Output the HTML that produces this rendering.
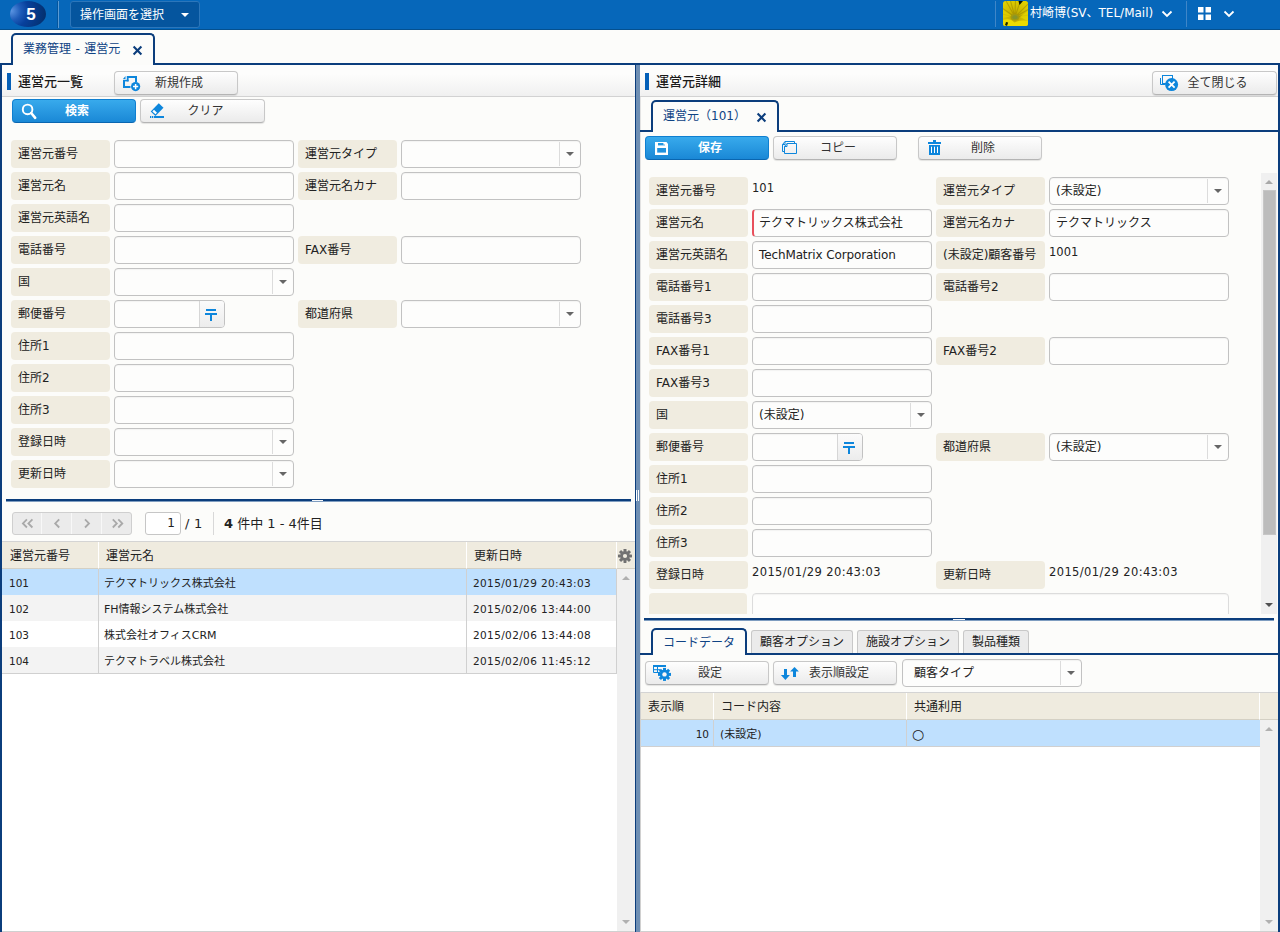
<!DOCTYPE html>
<html lang="ja"><head><meta charset="utf-8"><title>業務管理 - 運営元</title>
<style>
*{box-sizing:border-box;margin:0;padding:0}
html,body{width:1280px;height:932px;overflow:hidden;background:#fcfcfa}
body{position:relative;font-family:"DejaVu Sans","Liberation Sans","Noto Sans CJK JP",sans-serif;font-size:12px;color:#222;line-height:1}
.a{position:absolute}
.jp{font-family:"DejaVu Sans","Liberation Sans","Noto Sans CJK JP",sans-serif}
.lbl{position:absolute;background:#f0ece0;border-radius:4px;height:28px;line-height:29px;padding-left:7px;font-size:12px;color:#222;white-space:nowrap}
.inp{position:absolute;height:28px;border:1px solid #c2c2c2;border-radius:4px;background:#fdfdfc;line-height:27px;padding-left:6px;font-size:12px;white-space:nowrap;overflow:hidden;box-shadow:inset 0 1px 1px rgba(0,0,0,.04)}
.inp .sep{position:absolute;right:20px;top:1px;bottom:1px;width:1px;background:#dcdcdc}
.inp .car{position:absolute;right:6px;top:11px;width:0;height:0;border-left:4px solid transparent;border-right:4px solid transparent;border-top:4px solid #666}
.btn{position:absolute;height:24px;border:1px solid #c8c8c8;border-bottom-color:#b4b4b4;border-radius:4px;background:linear-gradient(#fefefe,#ebebeb);box-shadow:0 1px 1px rgba(0,0,0,.10);font-size:12px;color:#333;text-align:center;line-height:22px;white-space:nowrap}
.btn.blue{border:1px solid #0f7fd0;border-bottom-color:#0a66b0;background:linear-gradient(#38aaec,#1a88d6);box-shadow:none;color:#fff;font-weight:bold}
.btn svg{position:absolute}
.val{position:absolute;font-size:11.5px;line-height:14px;white-space:nowrap;color:#222}
.val.dt{letter-spacing:.39px}
.gc.num{font-size:10.5px}
.gc.num.dt{letter-spacing:.37px}
.dk{background:#0b3d7c}
.gh{position:absolute;background:#efebdf;height:27px;line-height:28px;font-size:12px;padding-left:8px;border-right:1px solid #fff;border-bottom:1px solid #d4d0c4;white-space:nowrap}
.gc{position:absolute;height:26px;line-height:29px;font-size:11px;padding-left:6px;white-space:nowrap;border-right:1px solid #d0d0d0}
.sech{position:absolute;height:32px;background:linear-gradient(#fdfdfc 30%,#f0f0f0);border-bottom:1px solid #d2d2d2}
.tab{position:absolute;border:2px solid #0b3d7c;border-bottom:none;border-radius:5px 5px 0 0;background:#fcfcfa;font-size:12px;color:#0f4384;white-space:nowrap}
.tabi{position:absolute;border:1px solid #c8c8c8;border-bottom:none;border-radius:3px 3px 0 0;background:#ebebeb;font-size:12px;color:#222;white-space:nowrap;text-align:center}
</style></head>
<body>
<div class="a" style="left:0;top:0;width:1280px;height:30px;background:#0667ba;border-bottom:1px solid #04508f"></div>
<div class="a" style="left:10px;top:1px;width:36px;height:26px;border-radius:50%;background:radial-gradient(ellipse 95% 130% at 4% 38%,#5a94e2 0%,#1d5bb8 28%,#07409c 50%,#04306f 100%)"></div>
<div class="a" style="left:13px;top:2px;width:36px;height:26px;line-height:26px;text-align:center;color:#fff;font-weight:bold;font-size:17px;font-family:'Liberation Sans',sans-serif">5</div>
<div class="a" style="left:57px;top:1px;width:1px;height:27px;background:#04559c"></div><div class="a" style="left:58px;top:1px;width:1px;height:27px;background:#5a9bd5"></div>
<div class="a jp" style="left:70px;top:1px;width:130px;height:27px;background:#05559e;border:1px solid #2c76ba;border-radius:3px;color:#fff;font-size:12px;line-height:26px;padding-left:9px">操作画面を選択</div>
<div class="a" style="left:181px;top:13px;width:0;height:0;border-left:4px solid transparent;border-right:4px solid transparent;border-top:4px solid #fff"></div>
<div class="a" style="left:995px;top:1px;width:1px;height:26px;background:#3f86c8"></div>
<svg class="a" style="left:1003px;top:1px" width="25" height="25" viewBox="0 0 25 25"><defs><clipPath id="av"><rect width="25" height="25" rx="2.5"/></clipPath><radialGradient id="avg" cx="0.48" cy="0.64" r="0.75"><stop offset="0" stop-color="#b0a000"/><stop offset="0.3" stop-color="#c8b400"/><stop offset="1" stop-color="#e2d200"/></radialGradient></defs><g clip-path="url(#av)"><rect width="25" height="25" fill="url(#avg)"/><path d="M12 16 L2 -2 M12 16 L7 -2 M12 16 L12.5 -2 M12 16 L18 -2 M12 16 L26 2 M12 16 L26 8 M12 16 L26 14 M12 16 L-1 7 M12 16 L-1 13" stroke="#9a8600" stroke-opacity=".55" stroke-width="1.1" fill="none"/><path d="M0 9 L9 15 L0 17 Z" fill="#e6d600" fill-opacity=".6"/><path d="M0 19 Q7 16.5 11.5 21.5 Q18 18.5 25 20 V25 H0Z" fill="#ecdc00"/><path d="M17 16 L25 10 V20 Z" fill="#e8d800" fill-opacity=".7"/><ellipse cx="12" cy="16.3" rx="4.3" ry="3.2" fill="#a39a10"/><ellipse cx="12" cy="16.3" rx="2.6" ry="2" fill="#86962a"/><path d="M15.5 0 H20 L16.5 4 Z" fill="#0a1200"/><path d="M3 21 L5.2 21.5 L4 25 L2 24Z" fill="#1c2a00"/></g></svg>
<div class="a jp" style="left:1030px;top:6px;color:#fff;font-size:12px;line-height:14px;white-space:nowrap">村崎博(SV、TEL/Mail)</div>
<svg class="a" style="left:1161px;top:10px" width="12" height="8" viewBox="0 0 12 8"><path d="M1.5 1.5 L6 6 L10.5 1.5" fill="none" stroke="#fff" stroke-width="1.8"/></svg>
<div class="a" style="left:1186px;top:1px;width:1px;height:26px;background:#3f86c8"></div>
<svg class="a" style="left:1198px;top:7px" width="13" height="13" viewBox="0 0 13 13"><rect x="0" y="0" width="5.5" height="5.5" fill="#fff"/><rect x="7.5" y="0" width="5.5" height="5.5" fill="#fff"/><rect x="0" y="7.5" width="5.5" height="5.5" fill="#fff"/><rect x="7.5" y="7.5" width="5.5" height="5.5" fill="#fff"/></svg>
<svg class="a" style="left:1223px;top:10px" width="12" height="8" viewBox="0 0 12 8"><path d="M1.5 1.5 L6 6 L10.5 1.5" fill="none" stroke="#fff" stroke-width="1.8"/></svg>
<div class="a dk" style="left:0;top:63px;width:1280px;height:2px"></div>
<div class="a dk" style="left:0;top:63px;width:2px;height:869px"></div>
<div class="a dk" style="left:1278px;top:63px;width:2px;height:869px"></div>
<div class="tab jp" style="left:11px;top:33px;width:144px;height:32px;line-height:29px;padding-left:10px;word-spacing:.6px">業務管理 - 運営元</div>
<svg class="a" style="left:132px;top:45px" width="11" height="11" viewBox="0 0 11 11"><path d="M1.6 1.6 L9.4 9.4 M9.4 1.6 L1.6 9.4" stroke="#0b3d7c" stroke-width="2.1"/></svg>
<div class="a dk" style="left:635px;top:65px;width:1px;height:867px"></div>
<div class="a" style="left:636px;top:65px;width:4px;height:867px;background:#6f8fb3"></div>
<div class="a" style="left:636px;top:490px;width:1px;height:11px;background:#fff"></div><div class="a" style="left:638px;top:490px;width:1px;height:11px;background:#fff"></div>
<div class="sech" style="left:2px;top:65px;width:633px"></div>
<div class="a" style="left:7px;top:73px;width:4px;height:17px;background:#0560b8"></div>
<div class="a jp" style="left:18px;top:74px;font-size:13px;font-weight:500;line-height:15px;color:#1a1a1a">運営元一覧</div>
<div class="btn jp" style="left:114px;top:71px;width:124px;padding-left:6px">新規作成</div>
<svg class="a" style="left:121px;top:74px" width="20" height="19" viewBox="121 74 20 19"><g fill="#0d86dc"><rect x="123" y="80.5" width="2" height="7.5"/><rect x="123" y="86" width="7.5" height="2"/><rect x="127" y="76" width="10" height="2"/><rect x="135" y="76" width="2" height="6"/><rect x="126.8" y="76" width="1.8" height="5.4"/><rect x="123" y="79.8" width="5.6" height="1.6"/><path d="M123 79 L125.5 76 V79 Z"/><circle cx="135.6" cy="86.6" r="4.6"/></g><path d="M133 86.6 H138.2 M135.6 84 V89.2" stroke="#fff" stroke-width="1.5"/></svg>
<div class="btn blue jp" style="left:12px;top:99px;width:124px;padding-left:6px">検索</div>
<svg class="a" style="left:20px;top:102px" width="18" height="18" viewBox="20 102 18 18"><circle cx="27.6" cy="109.4" r="4.8" fill="none" stroke="#fff" stroke-width="1.9"/><path d="M31.2 113 L35.2 117.8" stroke="#fff" stroke-width="2.6" stroke-linecap="round"/></svg>
<div class="btn jp" style="left:140px;top:99px;width:125px;padding-left:6px">クリア</div>
<svg class="a" style="left:149px;top:102px" width="17" height="18" viewBox="149 102 17 18"><g transform="translate(157.1,109.6) rotate(-46)"><rect x="-5.8" y="-3.3" width="11.6" height="6.6" fill="#0d86dc"/><rect x="-4.6" y="-2.1" width="2.3" height="4.2" fill="#fff"/></g><rect x="154" y="116" width="10" height="2" fill="#0d86dc"/><rect x="150" y="116" width="1.3" height="2" fill="#0d86dc"/><rect x="152" y="116" width="1.3" height="2" fill="#0d86dc"/></svg>
<div class="lbl" style="left:11px;top:140px;width:99px">運営元番号</div>
<div class="inp" style="left:114px;top:140px;width:180px"></div>
<div class="lbl" style="left:298px;top:140px;width:99px">運営元タイプ</div>
<div class="inp" style="left:401px;top:140px;width:180px"><span class="sep"></span><span class="car"></span></div>
<div class="lbl" style="left:11px;top:172px;width:99px">運営元名</div>
<div class="inp" style="left:114px;top:172px;width:180px"></div>
<div class="lbl" style="left:298px;top:172px;width:99px">運営元名カナ</div>
<div class="inp" style="left:401px;top:172px;width:180px"></div>
<div class="lbl" style="left:11px;top:204px;width:99px">運営元英語名</div>
<div class="inp" style="left:114px;top:204px;width:180px"></div>
<div class="lbl" style="left:11px;top:236px;width:99px">電話番号</div>
<div class="inp" style="left:114px;top:236px;width:180px"></div>
<div class="lbl" style="left:298px;top:236px;width:99px">FAX番号</div>
<div class="inp" style="left:401px;top:236px;width:180px"></div>
<div class="lbl" style="left:11px;top:268px;width:99px">国</div>
<div class="inp" style="left:114px;top:268px;width:180px"><span class="sep"></span><span class="car"></span></div>
<div class="lbl" style="left:11px;top:300px;width:99px">郵便番号</div>
<div class="inp" style="left:114px;top:300px;width:111px"><span class="a" style="left:84px;top:0;width:26px;height:26px;background:linear-gradient(#fbfbfb,#ececec);border-left:1px solid #d6d6d6"></span><span class="a" style="left:91px;top:8px;width:10px;height:2px;background:#0d86dc"></span><span class="a" style="left:90px;top:12px;width:12px;height:2px;background:#0d86dc"></span><span class="a" style="left:95px;top:14px;width:2px;height:6px;background:#0d86dc"></span></div>
<div class="lbl" style="left:298px;top:300px;width:99px">都道府県</div>
<div class="inp" style="left:401px;top:300px;width:180px"><span class="sep"></span><span class="car"></span></div>
<div class="lbl" style="left:11px;top:332px;width:99px">住所1</div>
<div class="inp" style="left:114px;top:332px;width:180px"></div>
<div class="lbl" style="left:11px;top:364px;width:99px">住所2</div>
<div class="inp" style="left:114px;top:364px;width:180px"></div>
<div class="lbl" style="left:11px;top:396px;width:99px">住所3</div>
<div class="inp" style="left:114px;top:396px;width:180px"></div>
<div class="lbl" style="left:11px;top:428px;width:99px">登録日時</div>
<div class="inp" style="left:114px;top:428px;width:180px"><span class="sep"></span><span class="car"></span></div>
<div class="lbl" style="left:11px;top:460px;width:99px">更新日時</div>
<div class="inp" style="left:114px;top:460px;width:180px"><span class="sep"></span><span class="car"></span></div>
<div class="a dk" style="left:6px;top:499px;width:625px;height:2px"></div><div class="a" style="left:6px;top:501px;width:625px;height:1px;background:#7f9dc0"></div>
<div class="a" style="left:312px;top:500px;width:11px;height:1px;background:#f4f7fb"></div>
<div class="a" style="left:12px;top:512px;width:120px;height:23px;border:1px solid #cfcfcf;border-radius:3px;background:#ebebeb"></div>
<div class="a" style="left:41px;top:513px;width:1px;height:21px;background:#f8f8f8"></div>
<div class="a" style="left:71px;top:513px;width:1px;height:21px;background:#f8f8f8"></div>
<div class="a" style="left:101px;top:513px;width:1px;height:21px;background:#f8f8f8"></div>
<svg class="a" style="left:12px;top:512px" width="120" height="23" viewBox="12 512 120 23"><path d="M26.9 519.3 L22.900000000000002 523.4 L26.9 527.5M32.4 519.3 L28.400000000000002 523.4 L32.4 527.5M59.2 519.3 L55.2 523.4 L59.2 527.5M85 519.3 L89 523.4 L85 527.5M112.8 519.3 L116.8 523.4 L112.8 527.5M118.3 519.3 L122.3 523.4 L118.3 527.5" fill="none" stroke="#a9a9a9" stroke-width="1.8"/></svg>
<div class="a" style="left:145px;top:512px;width:36px;height:23px;border:1px solid #c6c6c6;border-radius:3px;background:#fff;text-align:right;padding-right:5px;line-height:21px;font-size:12px">1</div>
<div class="a" style="left:185px;top:516px;font-size:13px;line-height:15px;letter-spacing:.3px">/ 1</div>
<div class="a" style="left:213px;top:512px;width:1px;height:23px;background:#d8d8d8"></div>
<div class="a jp" style="left:224px;top:516px;font-size:13px;line-height:15px;white-space:nowrap;font-family:'DejaVu Sans','Noto Sans CJK JP',sans-serif"><b>4</b> 件中 1 - 4件目</div>
<div class="a" style="left:2px;top:541px;width:633px;height:1px;background:#d4d4d4"></div>
<div class="gh jp" style="left:2px;top:542px;width:97px">運営元番号</div>
<div class="gh jp" style="left:99px;top:542px;width:368px;padding-left:7px">運営元名</div>
<div class="gh jp" style="left:467px;top:542px;width:150px;padding-left:7px">更新日時</div>
<div class="gh" style="left:617px;top:542px;width:18px;border-right:none;padding:0"></div>
<svg class="a" style="left:618px;top:549px" width="14" height="14" viewBox="-7 -7 14 14"><g fill="#727272"><circle r="4.7"/><rect x="-1.5" y="-7" width="3" height="14" rx="0.4" transform="rotate(0)"/><rect x="-1.5" y="-7" width="3" height="14" rx="0.4" transform="rotate(45)"/><rect x="-1.5" y="-7" width="3" height="14" rx="0.4" transform="rotate(90)"/><rect x="-1.5" y="-7" width="3" height="14" rx="0.4" transform="rotate(135)"/></g><circle r="2.1" fill="#efebdf"/></svg>
<div class="a" style="left:2px;top:673px;width:633px;height:259px;background:#fff"></div>
<div class="a" style="left:2px;top:569px;width:615px;height:26px;background:#bfe0fe"></div>
<div class="gc num" style="left:2px;top:569px;width:97px;padding-left:7px">101</div>
<div class="gc jp" style="left:99px;top:569px;width:368px;padding-left:5px">テクマトリックス株式会社</div>
<div class="gc num dt" style="left:467px;top:569px;width:150px">2015/01/29 20:43:03</div>
<div class="a" style="left:2px;top:595px;width:615px;height:26px;background:#f3f3f3"></div>
<div class="gc num" style="left:2px;top:595px;width:97px;padding-left:7px">102</div>
<div class="gc jp" style="left:99px;top:595px;width:368px;padding-left:5px">FH情報システム株式会社</div>
<div class="gc num dt" style="left:467px;top:595px;width:150px">2015/02/06 13:44:00</div>
<div class="a" style="left:2px;top:621px;width:615px;height:26px;background:#ffffff"></div>
<div class="gc num" style="left:2px;top:621px;width:97px;padding-left:7px">103</div>
<div class="gc jp" style="left:99px;top:621px;width:368px;padding-left:5px">株式会社オフィスCRM</div>
<div class="gc num dt" style="left:467px;top:621px;width:150px">2015/02/06 13:44:08</div>
<div class="a" style="left:2px;top:647px;width:615px;height:26px;background:#f3f3f3"></div>
<div class="gc num" style="left:2px;top:647px;width:97px;padding-left:7px">104</div>
<div class="gc jp" style="left:99px;top:647px;width:368px;padding-left:5px">テクマトラベル株式会社</div>
<div class="gc num dt" style="left:467px;top:647px;width:150px">2015/02/06 11:45:12</div>
<div class="a" style="left:2px;top:673px;width:615px;height:1px;background:#d0d0d0"></div>
<div class="a" style="left:617px;top:569px;width:18px;height:363px;background:#f0f0f0"></div>
<div class="a" style="left:622px;top:576px;width:0;height:0;border-left:4px solid transparent;border-right:4px solid transparent;border-bottom:4px solid #b0b0b0"></div>
<div class="a" style="left:622px;top:920px;width:0;height:0;border-left:4px solid transparent;border-right:4px solid transparent;border-top:4px solid #b0b0b0"></div>
<div class="a" style="left:640px;top:65px;width:1px;height:867px;background:#e2e2e2"></div>
<div class="sech" style="left:640px;top:65px;width:638px"></div>
<div class="a" style="left:645px;top:73px;width:4px;height:17px;background:#0560b8"></div>
<div class="a jp" style="left:656px;top:74px;font-size:13px;font-weight:500;line-height:15px;color:#1a1a1a">運営元詳細</div>
<div class="btn jp" style="left:1152px;top:71px;width:125px;padding-left:6px">全て閉じる</div>
<svg class="a" style="left:1159px;top:74px" width="20" height="18" viewBox="1159 74 20 18"><path d="M1160.5 78 V84.5 H1165" fill="none" stroke="#0d86dc" stroke-width="1"/><rect x="1162.5" y="75.5" width="10" height="8" fill="none" stroke="#0d86dc" stroke-width="1"/><circle cx="1171.6" cy="84.6" r="6.5" fill="#0d86dc"/><path d="M1168.6 81.6 L1174.6 87.6 M1174.6 81.6 L1168.6 87.6" stroke="#fff" stroke-width="1.8"/></svg>
<div class="a dk" style="left:640px;top:130px;width:638px;height:2px"></div>
<div class="tab jp" style="left:651px;top:100px;width:128px;height:32px;line-height:29px;padding-left:10px">運営元（101）</div>
<svg class="a" style="left:756px;top:112px" width="11" height="11" viewBox="0 0 11 11"><path d="M1.6 1.6 L9.4 9.4 M9.4 1.6 L1.6 9.4" stroke="#0b3d7c" stroke-width="2.1"/></svg>
<div class="btn blue jp" style="left:645px;top:136px;width:124px;padding-left:6px">保存</div>
<svg class="a" style="left:654px;top:141px" width="15" height="15" viewBox="654 141 15 15"><path d="M655 142 H666.5 L668 144 V155 H655 Z" fill="#fff"/><rect x="658" y="143" width="7" height="2.4" fill="#2396e0"/><rect x="663.4" y="143" width="1.6" height="1.6" fill="#fff"/><rect x="657.2" y="148" width="8.8" height="4.6" fill="#2192dd"/></svg>
<div class="btn jp" style="left:773px;top:136px;width:124px;padding-left:6px">コピー</div>
<svg class="a" style="left:781px;top:140px" width="17" height="15" viewBox="781 140 17 15"><g fill="none" stroke="#0d86dc" stroke-width="1"><path d="M782.5 151.5 V144.5 L785 141.5 H794.5 V143.5 M782.5 151.5 H784.5 M785 141.5 V144.5 H782.5"/><path d="M787 143.5 H796.5 V153.5 H784.5 V146.5 Z M787 143.5 V146.5 H784.5"/></g></svg>
<div class="btn jp" style="left:918px;top:136px;width:124px;padding-left:6px">削除</div>
<svg class="a" style="left:927px;top:139px" width="15" height="17" viewBox="927 139 15 17"><g fill="#0d86dc"><rect x="928" y="142" width="13" height="2"/><rect x="933" y="140" width="3" height="2"/><rect x="929" y="145" width="11" height="10"/></g><g fill="#fff"><rect x="931" y="146.7" width="1" height="6.3"/><rect x="934" y="146.7" width="1" height="6.3"/><rect x="937" y="146.7" width="1" height="6.3"/></g></svg>
<div class="lbl" style="left:649px;top:177px;width:99px">運営元番号</div>
<div class="val" style="left:752px;top:181px">101</div>
<div class="lbl" style="left:936px;top:177px;width:109px">運営元タイプ</div>
<div class="inp jp" style="left:1049px;top:177px;width:180px">(未設定)<span class="sep"></span><span class="car"></span></div>
<div class="lbl" style="left:649px;top:209px;width:99px">運営元名</div>
<div class="inp jp" style="left:752px;top:209px;width:180px;border-left:2px solid #e8505c;padding-left:5px">テクマトリックス株式会社</div>
<div class="lbl" style="left:936px;top:209px;width:109px">運営元名カナ</div>
<div class="inp jp" style="left:1049px;top:209px;width:180px">テクマトリックス</div>
<div class="lbl" style="left:649px;top:241px;width:99px">運営元英語名</div>
<div class="inp" style="left:752px;top:241px;width:180px"><span style="letter-spacing:-.12px">TechMatrix Corporation</span></div>
<div class="lbl" style="left:936px;top:241px;width:109px">(未設定)顧客番号</div>
<div class="val" style="left:1049px;top:245px">1001</div>
<div class="lbl" style="left:649px;top:273px;width:99px">電話番号1</div>
<div class="inp" style="left:752px;top:273px;width:180px"></div>
<div class="lbl" style="left:936px;top:273px;width:109px">電話番号2</div>
<div class="inp" style="left:1049px;top:273px;width:180px"></div>
<div class="lbl" style="left:649px;top:305px;width:99px">電話番号3</div>
<div class="inp" style="left:752px;top:305px;width:180px"></div>
<div class="lbl" style="left:649px;top:337px;width:99px">FAX番号1</div>
<div class="inp" style="left:752px;top:337px;width:180px"></div>
<div class="lbl" style="left:936px;top:337px;width:109px">FAX番号2</div>
<div class="inp" style="left:1049px;top:337px;width:180px"></div>
<div class="lbl" style="left:649px;top:369px;width:99px">FAX番号3</div>
<div class="inp" style="left:752px;top:369px;width:180px"></div>
<div class="lbl" style="left:649px;top:401px;width:99px">国</div>
<div class="inp jp" style="left:752px;top:401px;width:180px">(未設定)<span class="sep"></span><span class="car"></span></div>
<div class="lbl" style="left:649px;top:433px;width:99px">郵便番号</div>
<div class="inp" style="left:752px;top:433px;width:111px"><span class="a" style="left:84px;top:0;width:26px;height:26px;background:linear-gradient(#fbfbfb,#ececec);border-left:1px solid #d6d6d6"></span><span class="a" style="left:91px;top:8px;width:10px;height:2px;background:#0d86dc"></span><span class="a" style="left:90px;top:12px;width:12px;height:2px;background:#0d86dc"></span><span class="a" style="left:95px;top:14px;width:2px;height:6px;background:#0d86dc"></span></div>
<div class="lbl" style="left:936px;top:433px;width:109px">都道府県</div>
<div class="inp jp" style="left:1049px;top:433px;width:180px">(未設定)<span class="sep"></span><span class="car"></span></div>
<div class="lbl" style="left:649px;top:465px;width:99px">住所1</div>
<div class="inp" style="left:752px;top:465px;width:180px"></div>
<div class="lbl" style="left:649px;top:497px;width:99px">住所2</div>
<div class="inp" style="left:752px;top:497px;width:180px"></div>
<div class="lbl" style="left:649px;top:529px;width:99px">住所3</div>
<div class="inp" style="left:752px;top:529px;width:180px"></div>
<div class="lbl" style="left:649px;top:561px;width:99px">登録日時</div>
<div class="val dt" style="left:752px;top:565px">2015/01/29 20:43:03</div>
<div class="lbl" style="left:936px;top:561px;width:109px">更新日時</div>
<div class="val dt" style="left:1049px;top:565px">2015/01/29 20:43:03</div>
<div class="a" style="left:640px;top:593px;width:621px;height:21px;overflow:hidden"><div class="lbl" style="left:9px;top:0;width:98px"></div><div class="inp" style="left:112px;top:0;width:477px;height:40px;border-color:#dcdcdc"></div></div>
<div class="a" style="left:1261px;top:173px;width:16px;height:441px;background:#f0f0f0"></div>
<div class="a" style="left:1263px;top:190px;width:13px;height:345px;background:#bcbcbc;border:1px solid #c6c6c6"></div>
<div class="a" style="left:1265px;top:180px;width:0;height:0;border-left:4px solid transparent;border-right:4px solid transparent;border-bottom:4px solid #a8a8a8"></div>
<div class="a" style="left:1265px;top:603px;width:0;height:0;border-left:4px solid transparent;border-right:4px solid transparent;border-top:4px solid #505050"></div>
<div class="a dk" style="left:644px;top:618px;width:630px;height:2px"></div><div class="a" style="left:644px;top:620px;width:630px;height:1px;background:#7f9dc0"></div>
<div class="a" style="left:953px;top:619px;width:12px;height:1px;background:#f4f7fb"></div>
<div class="a dk" style="left:640px;top:653px;width:638px;height:2px"></div>
<div class="tabi jp" style="left:751px;top:630px;width:102px;height:23px;line-height:23px">顧客オプション</div>
<div class="tabi jp" style="left:857px;top:630px;width:102px;height:23px;line-height:23px">施設オプション</div>
<div class="tabi jp" style="left:963px;top:630px;width:66px;height:23px;line-height:23px">製品種類</div>
<div class="tab jp" style="left:651px;top:628px;width:96px;height:27px;line-height:26px;text-align:center">コードデータ</div>
<div class="btn jp" style="left:645px;top:661px;width:124px;padding-left:6px">設定</div>
<svg class="a" style="left:652px;top:664px" width="20" height="18" viewBox="652 664 20 18"><rect x="653" y="665" width="13" height="2" fill="#0d86dc"/><path d="M653.5 667 V672.5 H660 M653.5 669.7 H660 M657.5 667 V672.5" fill="none" stroke="#0d86dc" stroke-width="1"/><g transform="translate(664.5,674.4)" fill="#0d86dc"><circle r="4.7"/><rect x="-1.5" y="-6.5" width="3" height="13.0" transform="rotate(0)"/><rect x="-1.5" y="-6.5" width="3" height="13.0" transform="rotate(45)"/><rect x="-1.5" y="-6.5" width="3" height="13.0" transform="rotate(90)"/><rect x="-1.5" y="-6.5" width="3" height="13.0" transform="rotate(135)"/><circle r="2.2" fill="#f6f6f6"/></g></svg>
<div class="btn jp" style="left:773px;top:661px;width:124px;padding-left:35px;text-align:left">表示順設定</div>
<svg class="a" style="left:780px;top:666px" width="20" height="15" viewBox="780 666 20 15"><g fill="#0d86dc"><rect x="784" y="669" width="3" height="6.5"/><path d="M780.9 675 H789.9 L785.4 680 Z"/><rect x="793" y="671" width="3" height="6"/><path d="M790.1 671.6 H798.9 L794.5 667 Z"/></g></svg>
<div class="inp jp" style="left:902px;top:659px;width:180px;padding-left:11px">顧客タイプ<span class="sep"></span><span class="car"></span></div>
<div class="a" style="left:640px;top:720px;width:638px;height:212px;background:#fff"></div>
<div class="a" style="left:640px;top:692px;width:638px;height:1px;background:#d4d4d4"></div>
<div class="gh jp" style="left:640px;top:693px;width:74px">表示順</div>
<div class="gh jp" style="left:714px;top:693px;width:193px;padding-left:7px">コード内容</div>
<div class="gh jp" style="left:907px;top:693px;width:353px;padding-left:7px">共通利用</div>
<div class="gh" style="left:1260px;top:693px;width:18px;border-right:none;padding:0"></div>
<div class="a" style="left:640px;top:720px;width:620px;height:26px;background:#bfe0fe"></div>
<div class="gc num" style="left:640px;top:720px;width:74px;text-align:right;padding-right:4px;padding-left:0">10</div>
<div class="gc jp" style="left:714px;top:720px;width:193px">(未設定)</div>
<div class="gc jp" style="left:907px;top:720px;width:353px;border-right:none;font-size:14px;padding-left:5px;line-height:28px">○</div>
<div class="a" style="left:640px;top:746px;width:620px;height:1px;background:#d0d0d0"></div>
<div class="a" style="left:1260px;top:720px;width:18px;height:212px;background:#f0f0f0"></div>
<div class="a" style="left:1265px;top:727px;width:0;height:0;border-left:4px solid transparent;border-right:4px solid transparent;border-bottom:4px solid #b0b0b0"></div>
<div class="a" style="left:1265px;top:920px;width:0;height:0;border-left:4px solid transparent;border-right:4px solid transparent;border-top:4px solid #b0b0b0"></div>
<div class="a" style="left:640px;top:931px;width:638px;height:1px;background:#d0d0d0"></div><div class="a" style="left:2px;top:931px;width:633px;height:1px;background:#d0d0d0"></div>
<div class="a" style="left:640px;top:692px;width:1px;height:240px;background:#d0d0d0"></div>
</body></html>
